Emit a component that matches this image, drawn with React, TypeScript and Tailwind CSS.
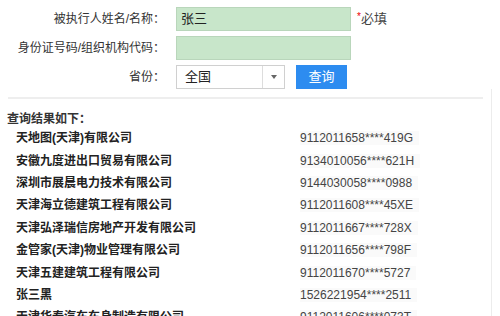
import React from "react";

const rows: [string, string][] = [
  ["天地图(天津)有限公司", "9112011658****419G"],
  ["安徽九度进出口贸易有限公司", "9134010056****621H"],
  ["深圳市展晨电力技术有限公司", "9144030058****0988"],
  ["天津海立德建筑工程有限公司", "9112011608****45XE"],
  ["天津弘泽瑞信房地产开发有限公司", "9112011667****728X"],
  ["金管家(天津)物业管理有限公司", "9112011656****798F"],
  ["天津五建建筑工程有限公司", "9112011670****5727"],
  ["张三黑", "1526221954****2511"],
  ["天津华泰汽车车身制造有限公司", "9112011606****073T"],
];

const cjk = { fontFamily: '"Liberation Sans", "Noto Sans CJK SC", sans-serif' };

export default function App() {
  return (
    <div className="w-[500px] h-[316px] overflow-hidden bg-white text-[12px] text-[#333]" style={cjk}>
      {/* search form */}
      <div className="flex flex-col gap-[5px] pt-[7px]">
        <div className="flex items-center h-6">
          <div className="w-[165px] text-right">被执行人姓名/名称：</div>
          <div className="ml-[11px] w-[175px] h-6 bg-[#c8e6ca] border border-[#b9d6bb] flex items-center px-[4px] text-[13px] text-[#222]">
            张三
          </div>
          <div className="ml-[6px] text-[13px] text-[#444]">
            <span className="text-[#e00] text-[10px] align-top">*</span>必填
          </div>
        </div>
        <div className="flex items-center h-6">
          <div className="w-[165px] text-right">身份证号码/组织机构代码：</div>
          <div className="ml-[11px] w-[175px] h-6 bg-[#c8e6ca] border border-[#b9d6bb]" />
        </div>
        <div className="flex items-center h-6">
          <div className="w-[165px] text-right">省份：</div>
          <div className="ml-[11px] w-[109px] h-6 bg-white border border-[#d0d0d0] flex items-center text-[13px] text-[#222]">
            <span className="flex-1 pl-[8px]">全国</span>
            <span className="w-[22px] h-full border-l border-[#ddd] flex items-center justify-center">
              <span className="block w-0 h-0 border-l-[3px] border-r-[3px] border-t-[4px] border-l-transparent border-r-transparent border-t-[#666]" />
            </span>
          </div>
          <button className="ml-[11px] w-[51px] h-6 bg-[#2d8cf0] text-white text-[13px] flex items-center justify-center">
            查询
          </button>
        </div>
      </div>

      <div className="flex">
        {/* results */}
        <div className="w-[492px] border-r border-[#ececec]">
          <div className="mx-[8px] mt-[8px] h-[2px] bg-[#eeeeee]" />
          <div className="pl-[7px] mt-[11px] font-bold leading-[18px]">查询结果如下：</div>
          <div className="-mt-[1px]">
            {rows.map(([name, code]) => (
              <div key={code} className="grid grid-cols-[300px_1fr] h-[22.4px] items-center">
                <div className="pl-[16px] font-bold text-[#222]">{name}</div>
                <div className="text-[#444]">
                  <span className="bg-[#fafafa] pr-[6px]">{code}</span>
                </div>
              </div>
            ))}
          </div>
        </div>
      </div>
    </div>
  );
}
